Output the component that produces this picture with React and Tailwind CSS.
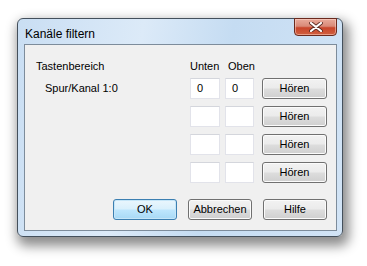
const btn =
  "h-[21px] rounded-[3px] border border-[#707070] bg-[linear-gradient(#f2f2f2,#ebebeb_48%,#dddddd_52%,#cfcfcf)] shadow-[inset_0_0_0_1px_#fbfbfb] text-[11px] text-black flex items-center justify-center";

const edit =
  "h-[21px] bg-white border border-[#e2e3ea] border-t-[#d4d6dc] text-[11px] text-black flex items-center pl-[6px]";

const CloseGlyph = () => (
  <svg width="14" height="10" viewBox="0 0 14 10">
    <path d="M2 1 L12 9 M12 1 L2 9" stroke="#5b2b22" strokeWidth="3.8" strokeLinecap="round" />
    <path d="M2 1 L12 9 M12 1 L2 9" stroke="#ffffff" strokeWidth="2.2" strokeLinecap="round" />
  </svg>
);

const Row = ({ label, value }) => (
  <div className="flex items-center h-[21px]">
    <span className="w-[154px] pl-[9px] whitespace-nowrap">{label}</span>
    <div className={`${edit} w-[30px]`}>{value}</div>
    <div className={`${edit} w-[29px] ml-[5px]`}>{value}</div>
    <button className={`${btn} w-[65px] ml-[8px]`}>Hören</button>
  </div>
);

export default function App() {
  return (
    <div className="w-[367px] h-[266px] bg-white pl-[17px] pt-[18px]" style={{ fontFamily: '"Liberation Sans", Arial, sans-serif' }}>
      <div className="w-[326px] h-[219px] rounded-[6px] border border-[#44505c] bg-[linear-gradient(100deg,#c9def3,#dceaf8_35%,#c5dcf2_60%,#d2e4f6)] shadow-[3px_6px_12px_3px_rgba(0,0,0,0.45)] flex flex-col">
        {/* title bar */}
        <div className="flex items-start h-[25px] shrink-0">
          <span className="text-[12px] text-black pl-[7px] pt-[6px]">Kanäle filtern</span>
          <button className="ml-auto mr-[5px] mt-[-1px] w-[43px] h-[18px] rounded-b-[4px] border border-[#6b2a1e] bg-[linear-gradient(#e9aa9b,#d98a78_45%,#c9452b_55%,#d0603f)] shadow-[inset_0_0_0_1px_rgba(255,220,210,0.5)] flex items-center justify-center">
            <CloseGlyph />
          </button>
        </div>
        {/* client */}
        <div className="ml-[6px] mr-[5px] mb-[5px] flex-1 border border-[#7d8c9b] bg-[#f0f0f0] text-[11px] text-black flex flex-col pt-[14px] pl-[11px]">
          <div className="flex items-center h-[14px]">
            <span className="w-[154px]">Tastenbereich</span>
            <span className="w-[38px]">Unten</span>
            <span>Oben</span>
          </div>
          <div className="flex flex-col gap-[7px] mt-[5px]">
            <Row label="Spur/Kanal 1:0" value="0" />
            <Row label="" value="" />
            <Row label="" value="" />
            <Row label="" value="" />
          </div>
          <div className="flex gap-[11px] mt-[16px] pl-[77px]">
            <button className="w-[64px] h-[21px] rounded-[3px] border border-[#3c7fb1] bg-[linear-gradient(#eaf6fd,#d9f0fc_48%,#bee6fd_52%,#a7d9f5)] shadow-[inset_0_0_0_1px_#c6e6f8] text-[11px] text-black flex items-center justify-center">OK</button>
            <button className={`${btn} w-[64px]`}>Abbrechen</button>
            <button className={`${btn} w-[64px]`}>Hilfe</button>
          </div>
        </div>
      </div>
    </div>
  );
}
